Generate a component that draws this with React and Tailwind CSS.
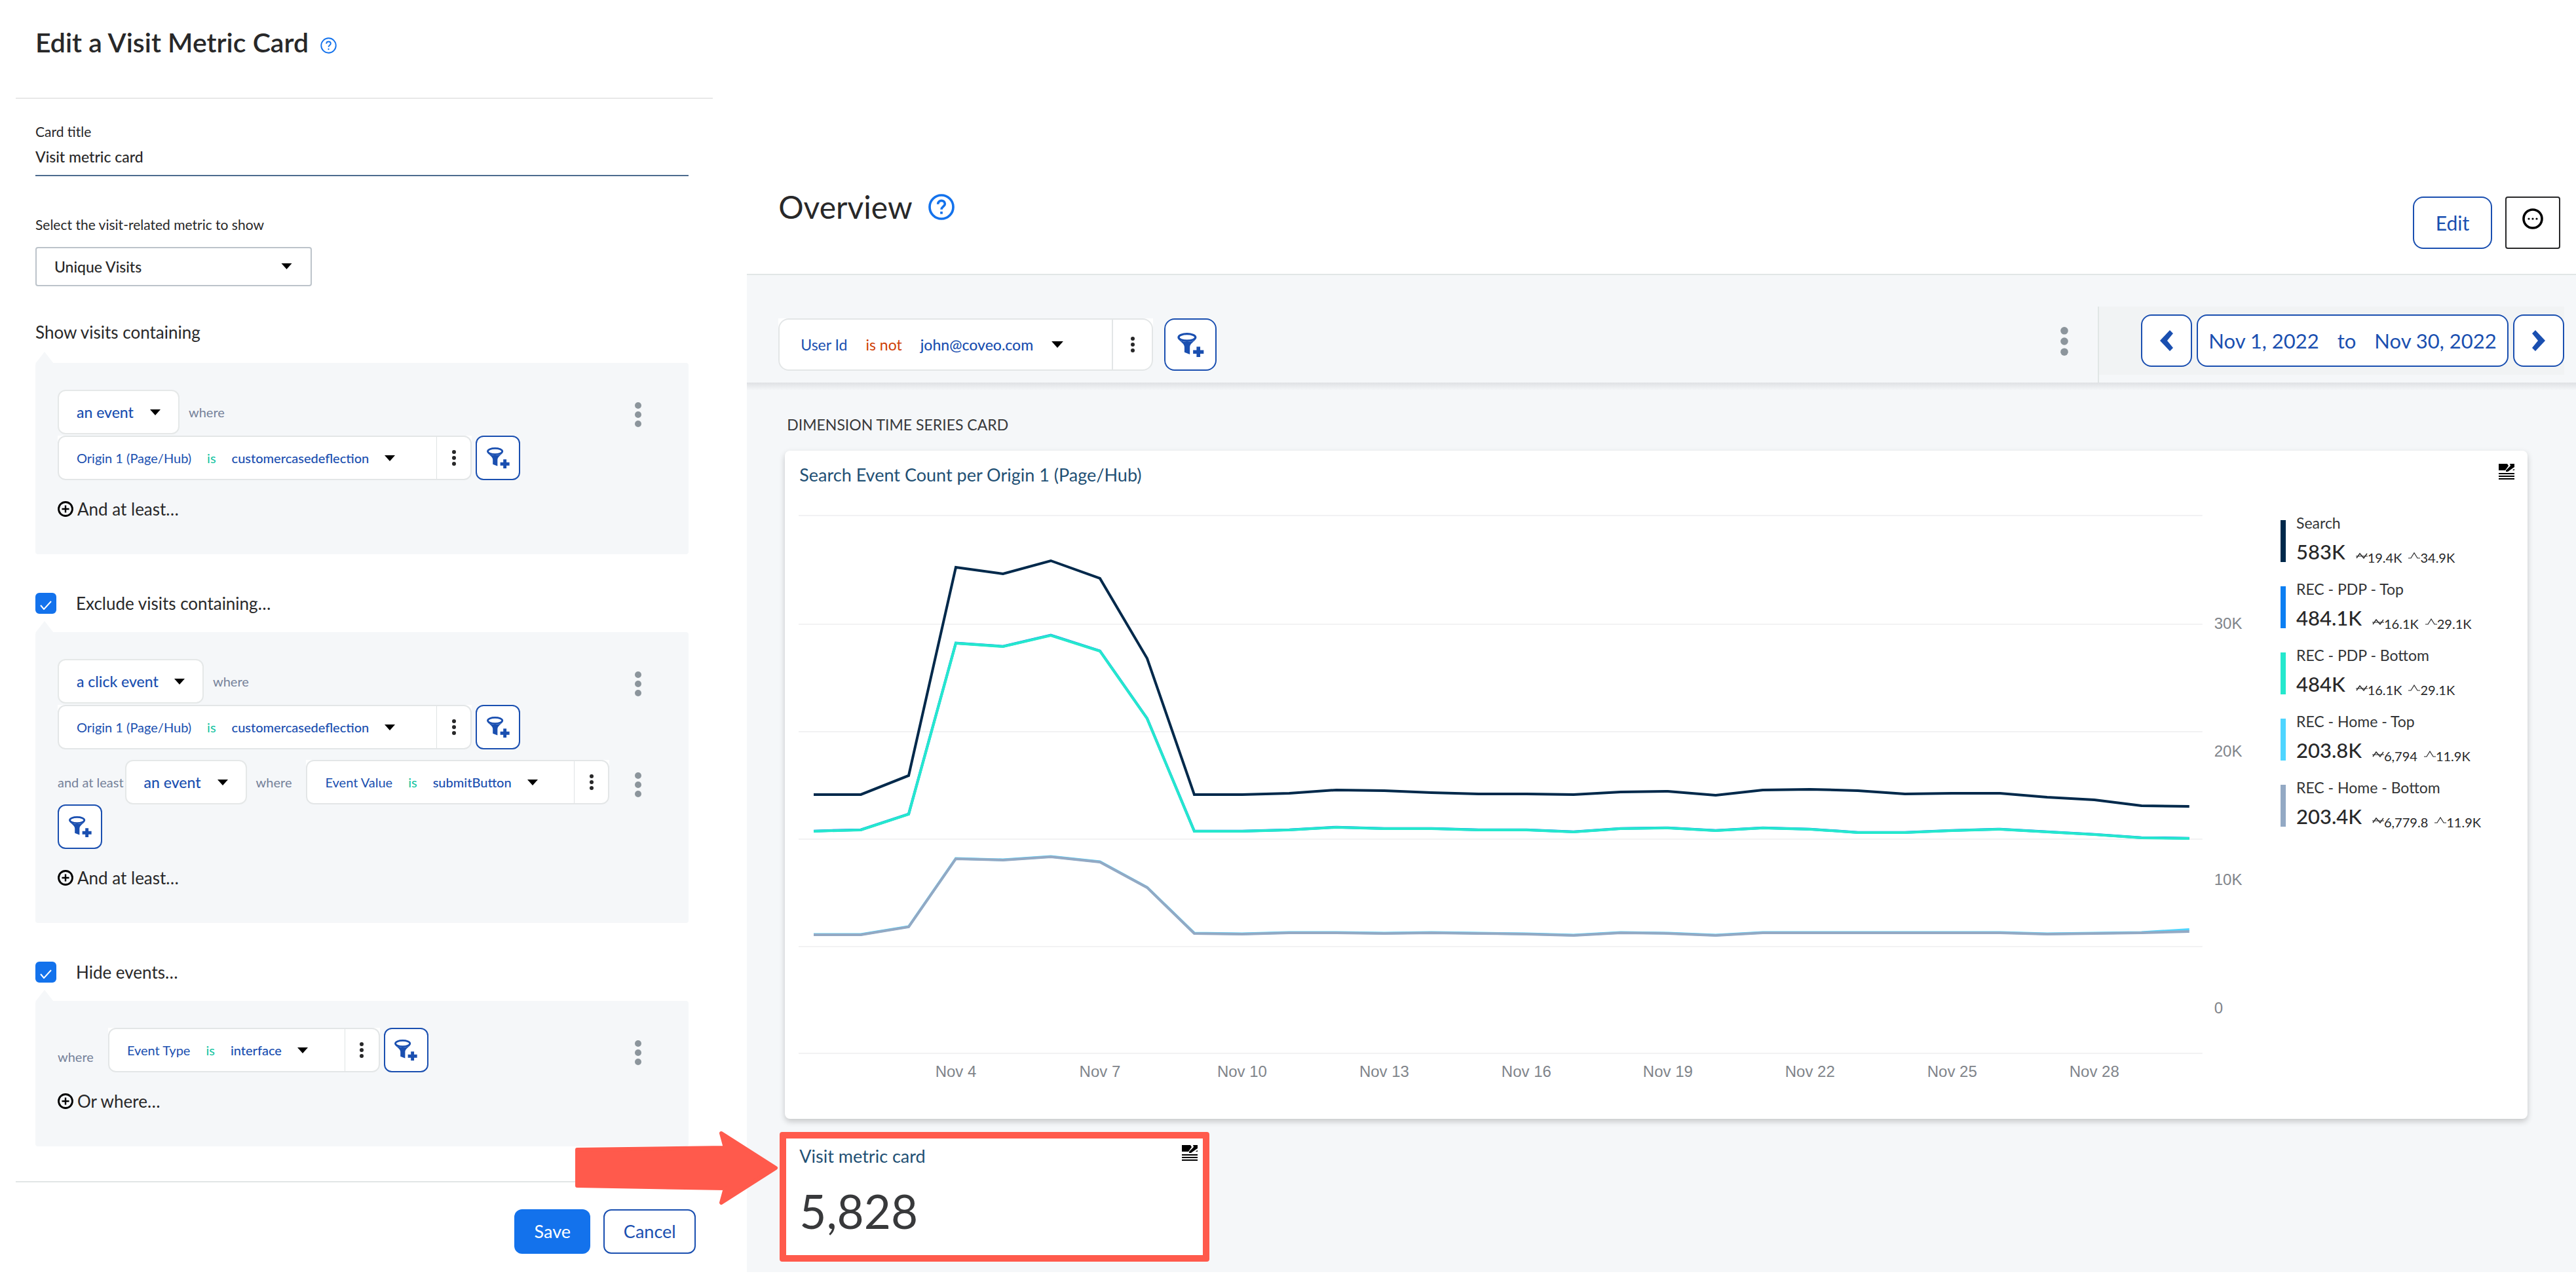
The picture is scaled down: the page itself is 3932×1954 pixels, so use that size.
import React, { useState } from 'react';

const DAYS = Array.from({ length: 30 }, (_, i) => i);

// y positions of each day on the chart canvas
const PDP_POINTS = [499, 497, 473, 212, 217, 200, 224, 327, 499, 499, 497, 493, 495, 495, 497, 497, 500, 495, 494, 498, 494, 496, 501, 501, 498, 496, 500, 504, 509, 510];
const HOME_POINTS = [657, 657, 645, 541, 543, 538, 546, 585, 655, 656, 654, 654, 655, 654, 655, 656, 658, 654, 655, 658, 654, 654, 654, 654, 654, 654, 656, 655, 654, 652];

const SERIES = [
  {
    name: 'Search', total: '583K', avg: '19.4K', max: '34.9K', bar: 'bg-[#00294b]', stroke: '#00294b',
    points: [443, 443, 414, 96, 106, 86, 113, 235, 443, 443, 441, 436, 437, 440, 442, 442, 443, 439, 438, 444, 436, 435, 437, 442, 441, 441, 447, 451, 460, 461],
  },
  {
    name: 'REC - PDP - Top', total: '484.1K', avg: '16.1K', max: '29.1K', bar: 'bg-[#0d7ff2]', stroke: '#0d7ff2',
    points: PDP_POINTS.map((y) => y - 0.3),
  },
  {
    name: 'REC - PDP - Bottom', total: '484K', avg: '16.1K', max: '29.1K', bar: 'bg-[#25e8cd]', stroke: '#25e8cd',
    points: PDP_POINTS,
  },
  {
    name: 'REC - Home - Top', total: '203.8K', avg: '6,794', max: '11.9K', bar: 'bg-[#4fd5ff]', stroke: '#4fd5ff',
    points: HOME_POINTS.map((y, day) => (day === 29 ? y - 3 : y - 0.4)),
  },
  {
    name: 'REC - Home - Bottom', total: '203.4K', avg: '6,779.8', max: '11.9K', bar: 'bg-[#93a9c4]', stroke: '#93a9c4',
    points: HOME_POINTS,
  },
];

const GRID_LINES = [17, 183, 347, 511, 675, 838];

const Y_LABELS = [['30K', 190], ['20K', 385], ['10K', 581], ['0', 777]];

const X_LABELS = [['Nov 4', 3], ['Nov 7', 6], ['Nov 10', 9], ['Nov 13', 12], ['Nov 16', 15], ['Nov 19', 18], ['Nov 22', 21], ['Nov 25', 24], ['Nov 28', 27]];

// Nov 6 has 25 hours (end of DST), so later days sit a bit further right
const dayX = (day) => 23 + Math.round(day * 72.3 + (day >= 6 ? 3 : 0));

/* ---------- Icons ---------- */

const HelpIcon = ({ className, strokeWidth }) => (
  <svg viewBox="0 0 24 24" className={className} fill="none" stroke="#1372ec" strokeWidth={strokeWidth}>
    <circle cx="12" cy="12" r="10.8" />
    <path d="M8.8 9.4c0-2 1.4-3.2 3.2-3.2s3.2 1.2 3.2 2.9c0 2.4-3.2 2.6-3.2 5.1" />
    <path d="M12 16.2v2.2" />
  </svg>
);

const Triangle = ({ className }) => (
  <svg viewBox="0 0 16 9" className={className}>
    <path d="M0 0h16L8 9z" fill="#000" />
  </svg>
);

const FilterPlusIcon = ({ className }) => (
  <svg viewBox="326 111 122 112" className={className} fill="#1a4fb0">
    <ellipse cx="370" cy="132" rx="39" ry="16" fill="none" stroke="#1a4fb0" strokeWidth="10" />
    <path d="M331 141c8 12 27 20 27 36v24l25 10v-34c0-16 19-24 27-36c-16 16-63 16-79 0z" />
    <path d="M414 175h17v16h16v17h-16v15h-17v-15h-16v-17h16z" />
  </svg>
);

const KebabIcon = ({ className, fill }) => (
  <svg viewBox="0 0 10 38" className={className} fill={fill}>
    <circle cx="5" cy="5" r="5" />
    <circle cx="5" cy="19" r="5" />
    <circle cx="5" cy="33" r="5" />
  </svg>
);

const SmallKebabIcon = () => (
  <svg viewBox="0 0 6 24" className="h-6 w-1.5" fill="#282829">
    <circle cx="3" cy="3" r="3" />
    <circle cx="3" cy="12" r="3" />
    <circle cx="3" cy="21" r="3" />
  </svg>
);

const PlusCircleIcon = () => (
  <svg viewBox="0 0 24 24" className="h-6 w-6" fill="none" stroke="#000">
    <circle cx="12" cy="12" r="10.5" strokeWidth="2.8" />
    <path d="M12 6.5v11M6.5 12h11" strokeWidth="2.4" />
  </svg>
);

const CardMenuIcon = () => (
  <svg viewBox="0 0 24 24" className="h-6 w-6">
    <path d="M0 0h13l2 3-5 7H0z" />
    <path d="M17 0h7v5l-3 2-7 5h-3v-2l7-7z" />
    <path d="M22 9l2-1v2h-3z" />
    <path d="M0 14h24v2H0zM0 18h24v2H0zM0 22h24v2H0z" />
  </svg>
);

const ChevronIcon = ({ right }) => (
  <svg viewBox="0 0 20 32" className={right ? 'h-8 w-5 rotate-180' : 'h-8 w-5'}>
    <path d="M15 0l5 5-9 11 9 11-5 5L0 16z" fill="#1a4fb0" />
  </svg>
);

const AverageIcon = () => (
  <svg viewBox="0 0 18 12" className="mb-1 h-3 w-[18px]" fill="none" stroke="#282829">
    <path d="M0 6h18" />
    <path d="M1 9l5-7 6 7 5-7" strokeWidth="1.4" />
  </svg>
);

const MaxIcon = () => (
  <svg viewBox="0 0 18 12" className="mb-1 h-3 w-[18px]" fill="none" stroke="#282829" strokeWidth="1.2">
    <path d="M0 9h4l5-8 5 8h4" />
  </svg>
);

/* ---------- Edit panel ---------- */

const EventSelect = ({ value, className }) => (
  <div className={`relative h-[68px] ${className}`}>
    <select aria-label="Event" className="h-full w-full appearance-none rounded-xl border-2 border-[#e5e8e8] bg-white pl-[27px] text-[23px] font-medium text-[#1a4fb0]">
      <option>{value}</option>
    </select>
    <Triangle className="pointer-events-none absolute right-[29px] top-[30px] h-[9px] w-4" />
  </div>
);

const FilterChip = ({ field, value, className }) => (
  <div className={`rounded-b-xl bg-white ${className}`}>
    <div className="flex h-[68px] overflow-hidden rounded-xl border-2 border-[#e3e6e7] text-[20px] text-[#1a4fb0]">
      <button className="flex flex-1 items-center gap-6 whitespace-nowrap pl-[27px]">
        <span>{field}</span>
        <span className="text-[#12c3a0]">is</span>
        <span className="font-medium">{value}</span>
        <Triangle className="h-[9px] w-4" />
      </button>
      <button aria-label="Filter options" className="flex w-[52px] items-center justify-center border-l border-[#dfe3e4]">
        <SmallKebabIcon />
      </button>
    </div>
  </div>
);

const AddFilterButton = () => (
  <button aria-label="Add filter" className="flex h-[68px] w-[68px] items-center justify-center rounded-xl border-2 border-[#1a4fb0] bg-white">
    <FilterPlusIcon className="h-8 w-[35px]" />
  </button>
);

const Hint = ({ children, className = '' }) => (
  <span className={`text-[20px] leading-7 text-[#75829a] ${className}`}>{children}</span>
);

const Condition = ({ children }) => (
  <div className="flex items-start justify-between">
    <div>{children}</div>
    <button aria-label="Condition options" className="mt-[19px]">
      <KebabIcon className="h-[38px] w-2.5" fill="#8c959c" />
    </button>
  </div>
);

const ConditionPanel = ({ children, addLabel, className = '' }) => (
  <div className={`relative rounded bg-[#f5f7f9] pb-[53px] pl-[34px] pr-[72px] pt-[41px] ${className}`}>
    <svg viewBox="0 0 28 18" className="absolute -top-[17px] left-0 h-[18px] w-7">
      <path d="M0 18L14 0l14 18z" fill="#f5f7f9" />
    </svg>
    {children}
    <button className="mt-7 flex items-center gap-1.5 text-[26px] leading-8 text-[#282829]">
      <PlusCircleIcon />
      {addLabel}
    </button>
  </div>
);

const SectionCheckbox = ({ label }) => {
  const [checked, setChecked] = useState(true);

  return (
    <label className="mt-[59px] flex items-center gap-[30px] text-[26px] leading-8 text-[#282829]">
      <span className="relative flex">
        <input
          type="checkbox"
          checked={checked}
          onChange={() => setChecked(!checked)}
          className="h-8 w-8 appearance-none rounded-md border-2 border-[#1372ec] bg-white checked:bg-[#1372ec]"
        />
        <svg viewBox="0 0 18 14" className="pointer-events-none absolute left-[7px] top-3 h-3.5 w-[18px]" fill="none" stroke="#fff" strokeWidth="2">
          <path d="M1 7l5 6L17 1" />
        </svg>
      </span>
      {label}
    </label>
  );
};

const EditPanel = () => {
  const [title, setTitle] = useState('Visit metric card');

  return (
    <aside className="w-[29%] shrink-0 pl-6 pr-[52px]">
      <header className="flex items-center gap-[18px] border-b-2 border-[#e8e8e8] pb-[59px] pl-[30px] pt-10">
        <h1 className="text-[41px] font-semibold leading-[50px] text-[#282829]">Edit a Visit Metric Card</h1>
        <a href="#help" aria-label="Help" className="mt-2">
          <HelpIcon className="h-[25px] w-[25px]" strokeWidth="1.8" />
        </a>
      </header>

      <div className="pl-[30px] pr-[37px] pt-9">
        <label htmlFor="card-title" className="block text-[21px] leading-7 text-[#282829]">Card title</label>
        <input
          id="card-title"
          value={title}
          onChange={(e) => setTitle(e.target.value)}
          className="block h-[54px] w-full border-b-2 border-[#4c6b8e] pb-1 text-[23px] font-medium text-[#282829] outline-none"
        />

        <label htmlFor="metric" className="mt-[60px] block text-[21px] leading-7 text-[#282829]">
          Select the visit-related metric to show
        </label>
        <div className="relative mt-5 h-[60px] w-[422px]">
          <select id="metric" className="h-full w-full appearance-none rounded border-2 border-[#bcc3ca] bg-white pl-[27px] text-[23px] font-medium text-[#282829]">
            <option>Unique Visits</option>
          </select>
          <Triangle className="pointer-events-none absolute right-[30px] top-[25px] h-[9px] w-[17px]" />
        </div>

        <h2 className="mt-[54px] text-[26px] leading-8 text-[#282829]">Show visits containing</h2>
        <ConditionPanel addLabel="And at least…" className="mt-[31px]">
          <Condition>
            <div className="flex items-center gap-3.5">
              <EventSelect value="an event" className="w-[186px]" />
              <Hint>where</Hint>
            </div>
            <div className="mt-0.5 flex items-center gap-1.5">
              <FilterChip field="Origin 1 (Page/Hub)" value="customercasedeflection" className="w-[632px]" />
              <AddFilterButton />
            </div>
          </Condition>
        </ConditionPanel>

        <SectionCheckbox label="Exclude visits containing…" />
        <ConditionPanel addLabel="And at least…" className="mt-7">
          <Condition>
            <div className="flex items-center gap-3.5">
              <EventSelect value="a click event" className="w-[223px]" />
              <Hint>where</Hint>
            </div>
            <div className="mt-0.5 flex items-center gap-1.5">
              <FilterChip field="Origin 1 (Page/Hub)" value="customercasedeflection" className="w-[632px]" />
              <AddFilterButton />
            </div>
          </Condition>
          <div className="mt-4">
            <Condition>
              <div className="flex items-center">
                <Hint className="mr-0.5">and at least</Hint>
                <EventSelect value="an event" className="w-[186px]" />
                <Hint className="mx-3.5">where</Hint>
                <FilterChip field="Event Value" value="submitButton" className="ml-2 w-[463px]" />
              </div>
              <AddFilterButton />
            </Condition>
          </div>
        </ConditionPanel>

        <SectionCheckbox label="Hide events…" />
        <ConditionPanel addLabel="Or where…" className="mt-7">
          <Condition>
            <div className="flex items-center gap-1.5">
              <Hint className="mb-2.5 mr-4 self-end">where</Hint>
              <FilterChip field="Event Type" value="interface" className="w-[415px]" />
              <AddFilterButton />
            </div>
          </Condition>
        </ConditionPanel>
      </div>

      <footer className="mt-[53px] flex justify-end gap-5 border-t-2 border-[#e1e6e6] pr-[26px] pt-[41px] text-[27px]">
        <button className="h-[68px] w-[116px] rounded-xl bg-[#1372ec] text-white">Save</button>
        <button className="h-[68px] w-[141px] rounded-xl border-2 border-[#1a4fb0] bg-white text-[#1a4fb0]">Cancel</button>
      </footer>
    </aside>
  );
};

/* ---------- Dashboard ---------- */

const DashboardHeader = () => (
  <header className="flex items-start justify-between border-b-2 border-[#e1e6e6] pb-[38px] pl-12 pr-6 pt-[288px]">
    <div className="flex items-center gap-6">
      <h1 className="text-[48px] leading-[56px] text-[#282829]">Overview</h1>
      <a href="#help" aria-label="Help">
        <HelpIcon className="h-10 w-10" strokeWidth="2.2" />
      </a>
    </div>
    <div className="mt-3 flex gap-5">
      <button className="h-20 w-[121px] rounded-2xl border-2 border-[#1a4fb0] text-[30px] text-[#1a4fb0]">Edit</button>
      <button aria-label="More" className="flex h-20 w-[84px] items-start justify-center rounded border-2 border-[#282829] pt-4">
        <svg viewBox="0 0 32 32" className="h-8 w-8">
          <circle cx="16" cy="16" r="14" fill="none" stroke="#000" strokeWidth="3.6" />
          <circle cx="10" cy="16" r="1.6" />
          <circle cx="16" cy="16" r="1.6" />
          <circle cx="22" cy="16" r="1.6" />
        </svg>
      </button>
    </div>
  </header>
);

const FilterBar = () => (
  <div className="flex justify-between bg-[#f5f7f9] pl-12 pr-[18px] pt-12">
    <div className="flex gap-[17px] pt-[18px]">
      <div className="h-20 w-[572px] rounded-b-2xl bg-white">
        <div className="flex h-full overflow-hidden rounded-2xl border-2 border-[#e3e6e7] text-[23px] text-[#1a4fb0]">
          <button className="flex flex-1 items-center gap-7 whitespace-nowrap pl-8">
            <span>User Id</span>
            <span className="text-[#cf3f06]">is not</span>
            <span className="font-medium">john@coveo.com</span>
            <Triangle className="h-2.5 w-[18px]" />
          </button>
          <button aria-label="Filter options" className="flex w-[61px] items-center justify-center border-l-2 border-[#e3e6e7]">
            <SmallKebabIcon />
          </button>
        </div>
      </div>
      <button aria-label="Add filter" className="flex h-20 w-20 items-center justify-center rounded-2xl border-2 border-[#1a4fb0] bg-white">
        <FilterPlusIcon className="h-[37px] w-[41px]" />
      </button>
    </div>

    <div className="flex">
      <button aria-label="Filter bar options" className="mr-[45px] mt-[31px] self-start">
        <KebabIcon className="h-11 w-3" fill="#8c959c" />
      </button>
      <div className="border-l-2 border-[#e1e6e6] pb-3">
        <div className="flex gap-[7px] bg-[#f1f3f4] py-3 pl-16">
          <button aria-label="Previous period" className="flex h-20 w-[78px] items-center justify-center rounded-2xl border-2 border-[#1a4fb0] bg-white">
            <ChevronIcon />
          </button>
          <button className="flex h-20 w-[476px] items-center justify-center gap-7 whitespace-nowrap rounded-2xl border-2 border-[#1a4fb0] bg-white text-[31px] text-[#1a4fb0]">
            <span>Nov 1, 2022</span>
            <span>to</span>
            <span>Nov 30, 2022</span>
          </button>
          <button aria-label="Next period" className="flex h-20 w-[78px] items-center justify-center rounded-2xl border-2 border-[#1a4fb0] bg-white">
            <ChevronIcon right />
          </button>
        </div>
      </div>
    </div>
  </div>
);

const TimeSeriesChart = () => (
  <svg viewBox="0 0 2214 890" className="h-auto min-w-0 flex-1 font-['Liberation_Sans',sans-serif]">
    {GRID_LINES.map((y) => (
      <path key={y} d={`M0 ${y}H2143`} stroke="#f2f2f3" strokeWidth="2" />
    ))}
    {SERIES.map((series) => (
      <polyline
        key={series.name}
        points={DAYS.map((day) => `${dayX(day)},${series.points[day]}`).join(' ')}
        fill="none"
        stroke={series.stroke}
        strokeWidth="4"
      />
    ))}
    {Y_LABELS.map(([label, y]) => (
      <text key={label} x="2161" y={y} fontSize="24" fill="#80848a">{label}</text>
    ))}
    {X_LABELS.map(([label, day]) => (
      <text key={label} x={dayX(day)} y="874" textAnchor="middle" fontSize="24" fill="#80848a">{label}</text>
    ))}
  </svg>
);

const Legend = () => (
  <ul className="w-[377px] shrink-0 pt-3.5">
    {SERIES.map((series) => (
      <li key={series.name} className="mb-[25px] flex gap-4">
        <span className={`mt-2.5 h-16 w-2 ${series.bar}`} />
        <div>
          <p className="text-[23px] leading-7 text-[#333436]">{series.name}</p>
          <div className="mt-3 flex items-end text-[#282829]">
            <span className="text-[31px] font-medium leading-9">{series.total}</span>
            <span className="ml-4 flex items-center text-[20px] leading-[18px]"><AverageIcon />{series.avg}</span>
            <span className="ml-2.5 flex items-center text-[20px] leading-[18px]"><MaxIcon />{series.max}</span>
          </div>
        </div>
      </li>
    ))}
  </ul>
);

const CardTitle = ({ children }) => (
  <div className="flex items-start justify-between">
    <h3 className="pt-px text-[27px] leading-8 text-[#1f5074]">{children}</h3>
    <button aria-label="Card menu">
      <CardMenuIcon />
    </button>
  </div>
);

const Arrow = () => (
  <svg viewBox="0 0 312 114" className="pointer-events-none absolute -top-0.5 right-full h-[114px] w-[312px]" fill="#ff5a4c" stroke="#ff5a4c" strokeWidth="6" strokeLinejoin="round">
    <path d="M3 29L229 26L223 4L306 57L223 110L229 88L3 84z" />
  </svg>
);

const Dashboard = () => (
  <main className="min-w-0 flex-1">
    <DashboardHeader />
    <FilterBar />
    <div className="h-3 bg-linear-to-b from-[#dfe1e4] to-[#f5f7f9]" />
    <div className="bg-[#f5f7f9] pb-4 pr-[74px] pt-9">
      <h2 className="pl-[61px] text-[23px] leading-8 text-[#38393b]">DIMENSION TIME SERIES CARD</h2>

      <section className="ml-[58px] mt-6 rounded-lg bg-white pb-12 pt-5 shadow-[0_4px_10px_rgba(0,0,0,0.2)]">
        <div className="pl-[22px] pr-5">
          <CardTitle>Search Event Count per Origin 1 (Page/Hub)</CardTitle>
        </div>
        <div className="mt-[29px] flex items-start gap-12 pl-[21px]">
          <TimeSeriesChart />
          <Legend />
        </div>
      </section>

      <div className="relative ml-[50px] mt-5 w-[656px]">
        <Arrow />
        <section className="h-[198px] rounded border-10 border-[#ff5a4c] bg-white pl-5 pr-2 pt-2.5">
          <CardTitle>Visit metric card</CardTitle>
          <p className="mt-[26px] text-[71px] leading-[84px] text-[#38393b]">5,828</p>
        </section>
      </div>
    </div>
  </main>
);

export default function App() {
  return (
    <div className="flex items-start bg-white font-['Lato',sans-serif]">
      <EditPanel />
      <Dashboard />
    </div>
  );
}
